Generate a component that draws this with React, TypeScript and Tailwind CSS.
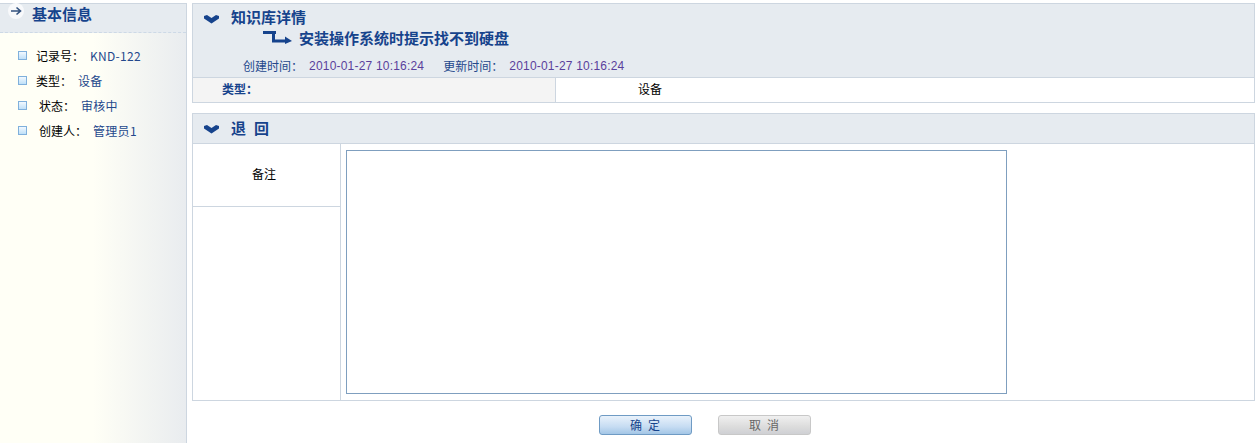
const cjk = "font-['SimSun','Noto_Sans_CJK_SC','Liberation_Sans',sans-serif]";

function Chevron({ className }: { className?: string }) {
  return (
    <svg width="15" height="9" viewBox="0 0 15 9" className={`shrink-0 ${className ?? ""}`}>
      <path d="M0 1 L3 0 L7.5 3 L12 0 L15 1 V3.5 L7.5 8.5 L0 3.5 Z" fill="#16438c" />
    </svg>
  );
}

function InfoRow({ label, value, indent }: { label: string; value: string; indent: string }) {
  return (
    <li className="flex h-[25px] items-center">
      <span className="h-[9px] w-[9px] shrink-0 border border-[#7fb0dc] bg-gradient-to-b from-[#f2f9ff] to-[#bfe0f8]" />
      <span className={`text-black ${indent}`}>{label}</span>
      <span className="ml-[6px] tracking-[0.3px] text-[#24488c]">{value}</span>
    </li>
  );
}

export default function App() {
  return (
    <div className={`flex h-[443px] w-[1259px] overflow-hidden bg-white text-xs ${cjk}`}>
      <aside className="mt-[3px] w-[187px] shrink-0 border-t border-r border-[#cdd6e0] bg-gradient-to-r from-[#fffff6] from-50% to-[#e9ecef]">
        <div className="flex h-[29px] items-start gap-[8px] border-b border-dashed border-[#cdd9e6] bg-[#e6ebf0] pl-[8px]">
          <span className="-mt-[1px] flex h-[16px] w-[16px] items-center justify-center rounded-full bg-[#f8f9fb]">
            <svg width="12" height="10" viewBox="0 0 12 10">
              <path d="M1 5 H10 M6.5 1.5 L10.5 5 L6.5 8.5" fill="none" stroke="#33527f" strokeWidth="1.6" />
            </svg>
          </span>
          <h2 className="text-[15px] leading-[20px] font-bold text-[#16438c]">基本信息</h2>
        </div>
        <ul className="pt-[10px] pl-[18px]">
          <InfoRow label="记录号：" value="KND-122" indent="ml-[9px]" />
          <InfoRow label="类型：" value="设备" indent="ml-[9px]" />
          <InfoRow label="状态：" value="审核中" indent="ml-[12px]" />
          <InfoRow label="创建人：" value="管理员1" indent="ml-[12px]" />
        </ul>
      </aside>

      <main className="ml-[5px] w-[1063px] pt-[3px]">
        <section className="border border-[#cdd6e0]">
          <div className="h-[74px] border-b border-[#cdd6e0] bg-[#e6ebf0]">
            <div className="flex h-[26px] items-center pl-[11px]">
              <Chevron className="mt-[5px]" />
              <h2 className="ml-[12px] text-[15px] font-bold text-[#16438c]">知识库详情</h2>
            </div>
            <div className="flex h-[15px] items-center pl-[70px]">
              <svg width="29" height="13" viewBox="0 0 29 13" className="shrink-0">
                <path d="M0 1.5 H13 M10.5 1 V10 H23" fill="none" stroke="#16438c" strokeWidth="3" />
                <path d="M22 5.5 L29 10 L22 13 Z" fill="#16438c" />
              </svg>
              <h3 className="ml-[7px] text-[15px] font-bold text-[#16438c]">安装操作系统时提示找不到硬盘</h3>
            </div>
            <div className="flex h-[32px] items-center pt-[9px] pl-[50px]">
              <span className="text-[#24488c]">创建时间：</span>
              <span className="ml-[6px] font-['Liberation_Sans',sans-serif] tracking-[0.2px] text-[#5a3f9c]">2010-01-27 10:16:24</span>
              <span className="ml-[19px] text-[#24488c]">更新时间：</span>
              <span className="ml-[6px] font-['Liberation_Sans',sans-serif] tracking-[0.2px] text-[#5a3f9c]">2010-01-27 10:16:24</span>
            </div>
          </div>
          <div className="flex h-[24px] items-center">
            <div className="flex h-full w-[363px] items-center border-r border-[#cdd6e0] bg-[#f4f4f4] pb-[3px] pl-[29px] font-bold text-[#16438c]">
              类型：
            </div>
            <div className="pb-[3px] pl-[82px] text-black">设备</div>
          </div>
        </section>

        <section className="mt-[10px] border border-[#cdd6e0]">
          <div className="flex h-[30px] items-center border-b border-[#cdd6e0] bg-[#e6ebf0] pl-[11px]">
            <Chevron className="mt-[1px]" />
            <h2 className="ml-[12px] pb-[2px] text-[15px] font-bold tracking-[8px] text-[#16438c]">退回</h2>
          </div>
          <div className="flex h-[256px]">
            <div className="w-[148px] shrink-0 border-r border-[#cdd6e0]">
              <div className="flex h-[63px] items-center justify-center border-b border-[#cdd6e0] pr-[5px] pb-[2px] text-black">备注</div>
            </div>
            <div className="p-[6px] pl-[5px]">
              <textarea className="block h-[244px] w-[661px] resize-none border border-[#7f9fbf] bg-white outline-none" />
            </div>
          </div>
        </section>

        <div className="flex justify-center gap-[26px] pt-[14px] pr-[38px]">
          <button className="h-[20px] w-[93px] rounded-[3px] border border-[#6f9bc4] bg-gradient-to-b from-[#e9f2fb] via-[#c6dcf2] via-60% to-[#a3c6e6] pl-[6px] tracking-[6px] text-[#16438c]">
            确定
          </button>
          <button className="h-[20px] w-[93px] rounded-[3px] border border-[#c8c8c8] bg-gradient-to-b from-[#f0f0f0] via-[#dcdcdc] via-60% to-[#cfd0d4] pl-[6px] tracking-[6px] text-[#666666]">
            取消
          </button>
        </div>
      </main>
    </div>
  );
}
